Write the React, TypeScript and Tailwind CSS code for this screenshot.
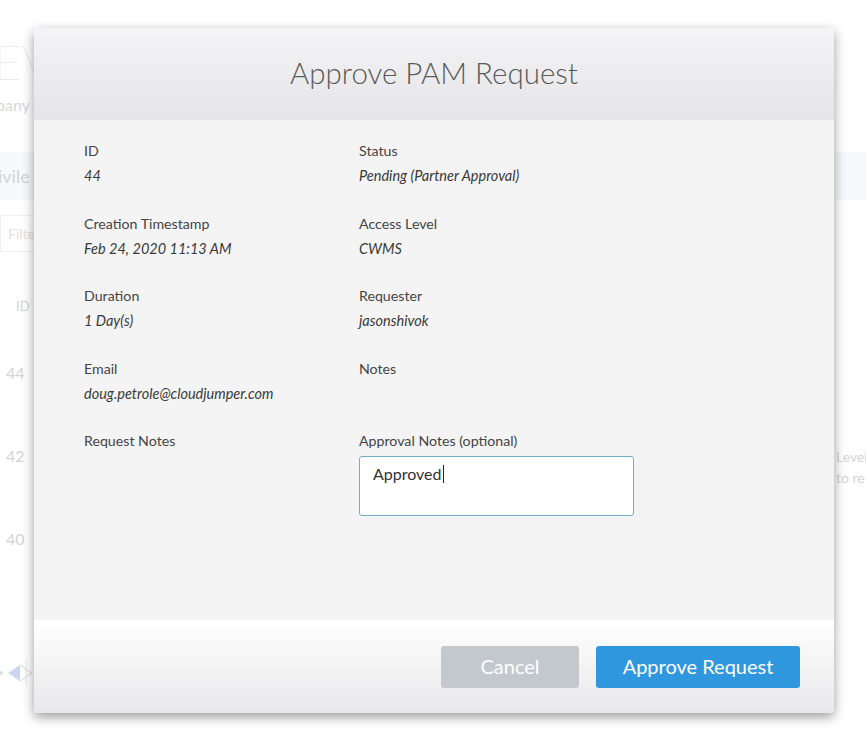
const fields: { label: string; value: string }[][] = [
  [
    { label: "ID", value: "44" },
    { label: "Status", value: "Pending (Partner Approval)" },
  ],
  [
    { label: "Creation Timestamp", value: "Feb 24, 2020 11:13 AM" },
    { label: "Access Level", value: "CWMS" },
  ],
  [
    { label: "Duration", value: "1 Day(s)" },
    { label: "Requester", value: "jasonshivok" },
  ],
  [
    { label: "Email", value: "doug.petrole@cloudjumper.com" },
    { label: "Notes", value: "" },
  ],
];

function Field({ label, value }: { label: string; value: string }) {
  return (
    <div className="flex flex-col">
      <div className="h-5 text-[14.2px] leading-5 text-[#444]">{label}</div>
      <div className="mt-[5px] h-5 text-[14.5px] italic leading-5 text-[#3a3a3a]">{value}</div>
    </div>
  );
}

function BackgroundPage() {
  return (
    <div className="flex flex-col text-[#d4d4d4]">
      <div className="h-[34px]" />
      <div className="-ml-[6px] h-[56px] text-[48px] font-thin leading-[56px] text-[#dcdcdc]">EV</div>
      <div className="-ml-[4px] h-[30px] text-[16px] leading-[30px] text-[#d8d8d8]">pany</div>
      <div className="h-[32px]" />
      <div className="flex h-[48px] items-center justify-between bg-[#f6f8fb] text-[18px]">
        <span className="-ml-[2px]">ivile</span>
      </div>
      <div className="h-[15px]" />
      <div className="flex h-[37px] w-[60px] items-center border border-[#f0f0f0] pl-[7px] text-[14px] text-[#e2e2e2]">
        Filte
      </div>
      <div className="flex h-[110px] items-center pl-[16px] text-[13px]">ID</div>
      <div className="flex h-[22px] items-center pl-[6px] text-[16px]">44</div>
      <div className="h-[61px]" />
      <div className="flex h-[22px] items-center justify-between pl-[6px] text-[16px]">
        <span>42</span>
        <span className="w-[30px] overflow-hidden whitespace-nowrap text-[14px]">Level</span>
      </div>
      <div className="flex h-[2px] justify-end">
        <span className="w-[30px] overflow-visible whitespace-nowrap text-[14px] leading-[22px]">to re</span>
      </div>
      <div className="h-[59px]" />
      <div className="flex h-[22px] items-center pl-[6px] text-[16px]">40</div>
      <div className="h-[110px]" />
      <div className="flex h-[26px] items-center">
        <svg width="36" height="26" viewBox="0 0 36 26">
          <circle cx="1" cy="13" r="2" fill="#e0e0e0" />
          <path d="M8 13 L20 5 L20 21 Z" fill="#c9d6ee" />
          <path d="M20 5 L32 13 L20 21" fill="none" stroke="#d8d8d8" strokeWidth="1" />
          <path d="M26 0 L26 26" stroke="#e4e4e4" strokeWidth="1" />
        </svg>
      </div>
    </div>
  );
}

export default function App() {
  return (
    <div
      className="relative h-[743px] w-[866px] overflow-hidden bg-white"
      style={{ fontFamily: "Lato, 'Open Sans', sans-serif" }}
    >
      <BackgroundPage />

      <div className="absolute left-[34px] top-[28px] flex w-[800px] flex-col overflow-hidden rounded-[4px] shadow-[0_4px_12px_rgba(0,0,0,0.4)]">
        {/* Header */}
        <div className="flex h-[92px] items-center justify-center bg-gradient-to-b from-[#f4f4f6] to-[#e5e5e7] pb-[2px]">
          <h1 className="text-[29.5px] font-light text-[#5a5a5a]">Approve PAM Request</h1>
        </div>

        {/* Body */}
        <div className="h-[500px] bg-[#f4f4f5] pl-[50px] pt-[21px]">
          <div className="grid grid-cols-[275px_275px] gap-y-[27.5px]">
            {fields.map((row) =>
              row.map((f) => <Field key={f.label} label={f.label} value={f.value} />)
            )}
            <div className="h-5 text-[14.2px] leading-5 text-[#444]">Request Notes</div>
            <div className="flex flex-col">
              <div className="h-5 text-[14.2px] leading-5 text-[#444]">Approval Notes (optional)</div>
              <div className="mt-[5px] h-[60px] w-[275px] rounded-[3px] border border-[#6fb0c6] bg-white px-[13px] pt-[5px] text-[16px] leading-6 text-[#333]">
                Approved<span className="ml-px inline-block h-[18px] w-px translate-y-[3px] bg-[#222]" />
              </div>
            </div>
          </div>
        </div>

        {/* Footer */}
        <div className="flex h-[93px] items-start justify-end gap-[17px] bg-gradient-to-b from-white to-[#e8e8ea] pr-[34px] pt-[26px]">
          <button className="h-[42px] w-[138px] rounded-[3px] bg-[#c3c8ce] pb-[2px] text-[20px] text-white">
            Cancel
          </button>
          <button className="h-[42px] w-[204px] rounded-[3px] bg-[#2f97dd] pb-[2px] text-[20px] text-white">
            Approve Request
          </button>
        </div>
      </div>
    </div>
  );
}
